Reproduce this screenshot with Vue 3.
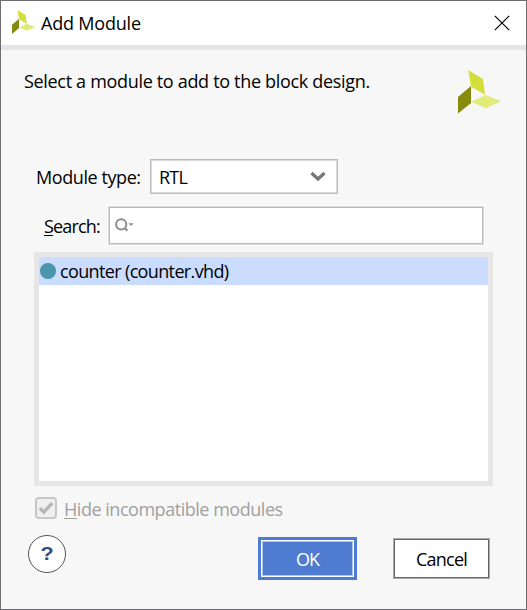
<script setup>
import { ref } from 'vue'

const modules = ref(['counter (counter.vhd)'])
const search = ref('')
</script>

<template>
  <div class="dialog">
    <header class="titlebar">
      <svg class="logo-small" viewBox="0 0 44 44">
        <path class="leaf-top" d="M10 0 25 9 27 25 13 17Z" />
        <path class="leaf-left" d="M0 27 13 16V33L0 44Z" />
        <path class="leaf-right" d="M13 32 27 25 43 31 28 38Z" />
      </svg>
      <span class="title">Add Module</span>
      <svg class="close" viewBox="0 0 16 16"><path d="M.8.8 15.2 15.2M15.2.8.8 15.2" /></svg>
    </header>
    <main class="body">
      <div class="intro">
        <span class="intro-text">Select a module to add to the block design.</span>
        <svg class="logo" viewBox="0 0 44 44">
          <path class="leaf-top" d="M10.2 0 25 9 27.2 25 13 16.5Z" />
          <path class="leaf-left" d="M0 27 13 16V33L0 43.5Z" />
          <path class="leaf-right" d="M13 32 27.5 25 43 31.3 28.3 38.3Z" />
        </svg>
      </div>
      <div class="type-row">
        <span class="type-label">Module type:</span>
        <div class="select">
          <span class="rtl">RTL</span>
          <svg class="chevron" viewBox="0 0 16 11"><path d="M1.5 2 8 8 14.5 2" /></svg>
        </div>
      </div>
      <div class="search-row">
        <span class="search-label"><u>S</u>earch:</span>
        <label class="search">
          <svg viewBox="0 0 20 16">
            <circle cx="6.2" cy="6.4" r="5.1" />
            <path class="handle" d="m9.5 9.7 3 3" />
            <path class="arrow" d="M13.5 5.2h5l-2.5 2.8Z" />
          </svg>
          <input v-model="search" type="text" />
        </label>
      </div>
      <div class="list">
        <div v-for="m in modules" :key="m" class="item">
          <span class="dot"></span><span class="item-text">{{ m }}</span>
        </div>
      </div>
      <div class="check-row">
        <svg class="check" viewBox="0 0 22 22">
          <rect x="1" y="1" width="20" height="20" rx="3" />
          <path d="m4.8 11.2 4 4 8.4-9.2" />
        </svg>
        <span class="check-text"><u>H</u>ide incompatible modules</span>
      </div>
      <footer class="actions">
        <button class="help"><span>?</span></button>
        <button class="ok"><span>OK</span></button>
        <button class="cancel"><span>Cancel</span></button>
      </footer>
    </main>
  </div>
</template>

<style>
body {
  margin: 0;
}
</style>

<style scoped>
* {
  box-sizing: border-box;
}
.dialog {
  width: 527px;
  height: 610px;
  border: 1px solid #6d6d70;
  background: #f7f7f7;
  color: #000;
  font: 18px/24px "Open Sans", "Noto Sans", sans-serif;
  white-space: nowrap;
  overflow: hidden;
}
svg {
  display: block;
  flex: none;
}
button {
  margin: 0;
  padding: 0;
  font: inherit;
}
u {
  text-decoration-thickness: 1px;
  text-underline-offset: 2px;
  text-decoration-skip-ink: none;
}
.titlebar {
  display: flex;
  height: 49px;
  padding-left: 11px;
  background: #fff;
  border-bottom: 5px solid #e6e6e6;
}
.logo-small {
  width: 24px;
  height: 24px;
  margin-top: 9px;
}
.leaf-top {
  fill: #d5df3b;
}
.leaf-left {
  fill: #868b0b;
}
.leaf-right {
  fill: #e3ea7c;
}
.title {
  margin: 10px 0 0 5px;
  letter-spacing: -0.2px;
}
.close {
  width: 16px;
  height: 16px;
  margin: 14px 16px 0 auto;
  fill: none;
  stroke: #000;
  stroke-width: 1.2;
}
.intro {
  display: flex;
  justify-content: space-between;
  height: 109px;
  padding: 19px 24px 0 23px;
}
.intro-text {
  letter-spacing: -0.32px;
}
.logo {
  width: 44px;
  height: 44px;
  margin-top: 1px;
}
.type-row {
  display: flex;
  height: 47px;
  padding-left: 35px;
}
.type-label {
  width: 114px;
  margin-top: 6px;
  letter-spacing: -0.42px;
}
.select {
  display: flex;
  align-items: center;
  justify-content: space-between;
  width: 188px;
  height: 35px;
  padding: 0 11px 0 8px;
  background: #fff;
  border: 1px solid #bababa;
  box-shadow: inset 0 0 0 1px #d9d9d9;
}
.rtl {
  letter-spacing: -0.8px;
}
.chevron {
  width: 16px;
  height: 11px;
  fill: none;
  stroke: #777;
  stroke-width: 3.2;
}
.search-row {
  display: flex;
  height: 46px;
  padding-left: 43px;
}
.search-label {
  width: 64px;
  margin-top: 8px;
  letter-spacing: -0.85px;
}
.search {
  display: flex;
  width: 376px;
  height: 39px;
  padding: 11px 5px 0 6px;
  background: #fff;
  border: 1px solid #d9d9d9;
  box-shadow: inset 0 0 0 1px #bababa, 0 0 0 1px #fff;
}
.search svg {
  width: 20px;
  height: 16px;
}
.search circle,
.handle {
  fill: none;
  stroke: #8c8c8c;
  stroke-width: 2;
}
.arrow {
  fill: #8c8c8c;
}
.search input {
  flex: 1;
  height: 20px;
  padding: 0;
  border: 0;
  outline: 0;
  background: transparent;
  font: inherit;
}
.list {
  width: 459px;
  height: 234px;
  margin-left: 33px;
  border: 5px solid #e6e6e6;
  background: #fff;
}
.item {
  display: flex;
  align-items: center;
  height: 28px;
  padding-left: 1px;
  background: #cadcff;
}
.dot {
  width: 16px;
  height: 16px;
  border-radius: 50%;
  background: #4a96ad;
}
.item-text {
  margin: 0 0 1px 4px;
  letter-spacing: -0.64px;
}
.check-row {
  display: flex;
  height: 49px;
  padding: 11px 0 0 34px;
}
.check {
  width: 22px;
  height: 22px;
}
.check rect {
  fill: #efefef;
  stroke: #c7c7c7;
  stroke-width: 2;
}
.check path {
  fill: none;
  stroke: #b5b5b5;
  stroke-width: 3.3;
}
.check-text {
  margin: 0 0 0 7px;
  color: #a0a0a0;
  letter-spacing: -0.47px;
}
.actions {
  display: flex;
  padding-left: 27px;
}
.help {
  width: 38px;
  height: 38px;
  border: 1px solid #555;
  border-radius: 50%;
  background: #fff;
  color: #2f4b87;
  font: bold 18px/36px "Liberation Sans", sans-serif;
}
.help span {
  display: block;
  transform: scaleX(1.2);
}
.ok {
  width: 99px;
  height: 43px;
  margin: 2px 0 0 192px;
  padding: 3px;
  border: 0;
  background: #4f7bd0;
  color: #fff;
}
.ok span {
  display: block;
  height: 37px;
  border: 1px solid #fff;
  box-shadow: inset 0 0 0 1px #afc4eb;
  line-height: 36px;
  letter-spacing: -0.9px;
}
.cancel {
  width: 97px;
  height: 41px;
  margin: 3px 0 0 36px;
  border: 1px solid #aaa;
  background: #fff;
  color: #000;
}
.cancel span {
  display: block;
  height: 39px;
  border: 1px solid #666;
  line-height: 39px;
  letter-spacing: -0.75px;
}
</style>
